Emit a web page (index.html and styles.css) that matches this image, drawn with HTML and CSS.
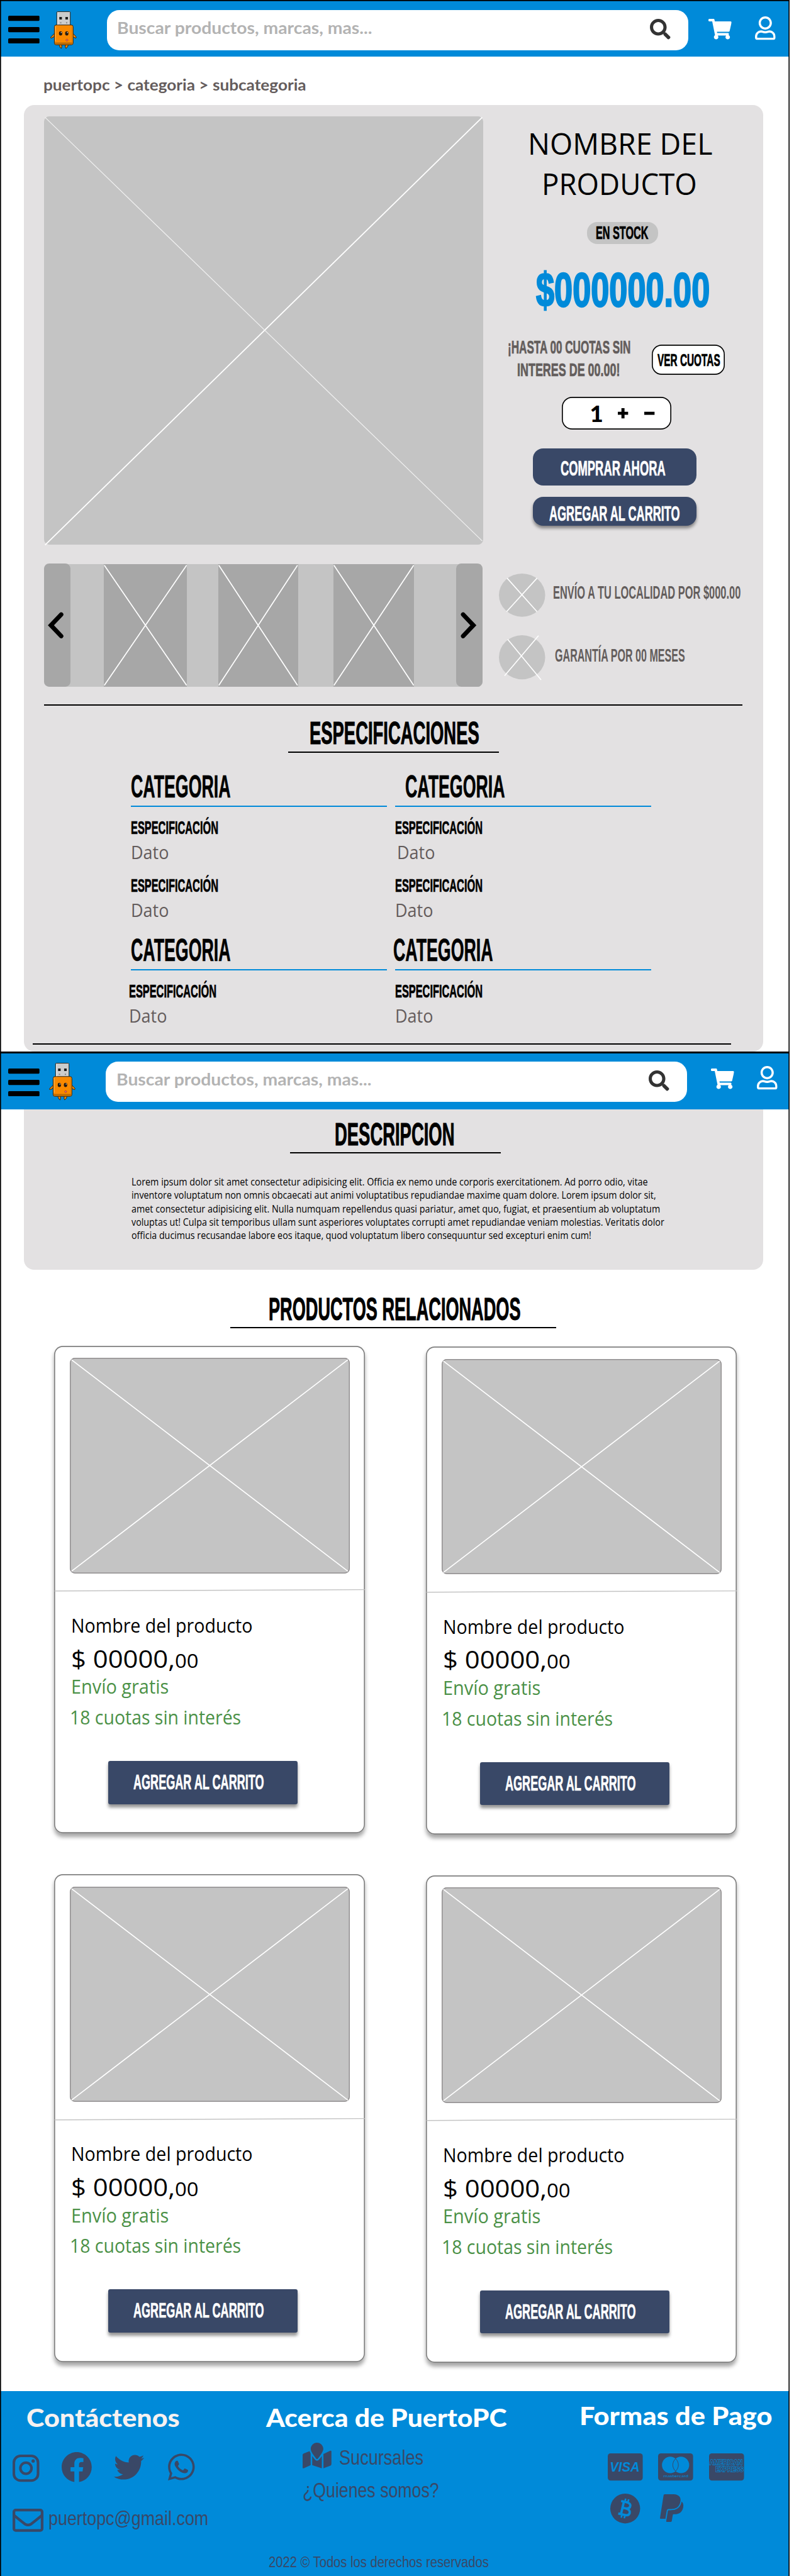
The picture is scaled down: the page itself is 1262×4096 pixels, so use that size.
FILE: index.html
```html
<!DOCTYPE html>
<html lang="es">
<head>
<meta charset="utf-8">
<title>PuertoPC - Producto</title>
<link rel="stylesheet" href="styles.css">
</head>
<body>
<svg class="sprite" aria-hidden="true">
  <symbol id="menu" viewBox="0 0 61 54"><rect width="61" height="10" rx="2"/><rect y="22" width="61" height="10" rx="2"/><rect y="44" width="61" height="10" rx="2"/></symbol>
  <symbol id="mascot" viewBox="0 0 52 73">
    <g stroke="#2b2417" stroke-width="1.2">
      <path d="M8 43L2 49Q-1 52 2 52Q7 51 8 48zM44 43L49 48Q52 52 49 52Q45 51 43 48z" fill="#f08400"/>
      <path d="M17 64Q18 71 21.500 72.300Q23 69 22 64zM29.500 64Q28 70 30.500 72.300Q35 69 35 64z" fill="#f08400"/>
      <rect x="12.600" y=".7" width="26.200" height="28" rx="1.500" fill="#ccc"/>
      <rect x="7.800" y="26.600" width="36.600" height="38.600" rx="3.500" fill="#f98900"/>
    </g>
    <path d="M8.500 60.500H44V62Q43.500 64.600 41 64.600H11Q8.500 64.500 8.500 62z" fill="#b96a06"/>
    <path d="M10 29V58" stroke="#ffb04d" stroke-width="1.500"/><path d="M42.500 29V60" stroke="#d37a0a" stroke-width="1.500"/>
    <path d="M14.500 3V26" stroke="#eee" stroke-width="1.500"/>
    <path d="M17.500 11h5v5h-5zM29.300 11h5v5h-5z" fill="#1d1d1d"/><path d="M19 21h2.500v2.500H19zM30.500 21H33v2.500h-2.500z" fill="#888"/>
    <ellipse cx="20" cy="43" rx="3.200" ry="4" fill="#241a10"/><ellipse cx="32" cy="43" rx="3.200" ry="4" fill="#241a10"/>
    <circle cx="21.200" cy="41.300" r="1" fill="#fff"/><circle cx="33.200" cy="41.300" r="1" fill="#fff"/>
    <circle cx="32.300" cy="56" r="1.900" fill="#e8607a" stroke="#8a3a1a" stroke-width=".7"/>
  </symbol>
  <symbol id="search" viewBox="0 0 512 512"><path d="M505 442.700L405.300 343c-4.500-4.500-10.600-7-17-7H372c27.600-35.300 44-79.700 44-128C416 93.100 322.900 0 208 0S0 93.100 0 208s93.100 208 208 208c48.300 0 92.700-16.400 128-44v16.300c0 6.400 2.500 12.500 7 17l99.700 99.700c9.400 9.400 24.600 9.400 33.900 0l28.300-28.300c9.400-9.400 9.400-24.600.1-34zM208 336c-70.700 0-128-57.200-128-128 0-70.700 57.200-128 128-128 70.700 0 128 57.200 128 128 0 70.700-57.200 128-128 128z"/></symbol>
  <symbol id="cart" viewBox="0 0 576 512"><path d="M528.120 301.319l47.273-208C578.806 78.301 567.391 64 551.990 64H159.208l-9.166-44.810C147.758 8.021 137.930 0 126.529 0H24C10.745 0 0 10.745 0 24v16c0 13.255 10.745 24 24 24h69.883l70.248 343.435C147.325 417.100 136 435.222 136 456c0 30.928 25.072 56 56 56s56-25.072 56-56c0-15.674-6.447-29.835-16.824-40h209.647C430.447 426.165 424 440.326 424 456c0 30.928 25.072 56 56 56s56-25.072 56-56c0-22.172-12.888-41.332-31.579-50.405l5.517-24.276c3.413-15.018-8.002-29.319-23.403-29.319H218.117l-6.545-32h293.145c11.206 0 20.920-7.754 23.403-18.681z"/></symbol>
  <symbol id="user" viewBox="0 0 448 512" preserveAspectRatio="none"><path d="M313.600 304c-28.700 0-42.500 16-89.600 16-47.100 0-60.800-16-89.600-16C60.200 304 0 364.200 0 438.400V464c0 26.500 21.500 48 48 48h352c26.500 0 48-21.500 48-48v-25.600c0-74.200-60.200-134.400-134.400-134.400zM400 464H48v-25.600c0-47.600 38.800-86.400 86.400-86.400 14.600 0 38.300 16 89.600 16 51.700 0 74.900-16 89.600-16 47.600 0 86.400 38.800 86.400 86.400V464zM224 288c79.500 0 144-64.500 144-144S303.500 0 224 0 80 64.500 80 144s64.500 144 144 144zm0-240c52.900 0 96 43.100 96 96s-43.100 96-96 96-96-43.100-96-96 43.100-96 96-96z"/></symbol>
  <symbol id="cross" viewBox="0 0 100 100" preserveAspectRatio="none"><path d="M.6.9L99.400 99.100M.6 99.100L99.400.9" fill="none" stroke="#fff" stroke-width="1.700" vector-effect="non-scaling-stroke"/></symbol>
</svg>

<div class="page">
  <header class="bar">
    <svg class="ic-menu"><use href="#menu"/></svg>
    <svg class="ic-mascot"><use href="#mascot"/></svg>
    <div class="search"><span class="fit round placeholder" style="--w:49.6rem">Buscar productos, marcas, mas...</span><svg class="ic-search"><use href="#search"/></svg></div>
    <svg class="ic-cart"><use href="#cart"/></svg>
    <svg class="ic-user"><use href="#user"/></svg>
  </header>

  <nav class="crumbs"><span class="fit round" style="--w:51.1rem">puertopc &gt; categoria &gt; subcategoria</span></nav>

  <main class="panel">
    <section class="product">
      <div class="gallery">
        <svg class="photo" viewBox="0 0 854 834"><path d="M2 834L852 2" stroke="#fff" stroke-width="2.200"/><path d="M2 2L852 826" stroke="#f2f2f2" stroke-width="1.400"/></svg>
        <div class="carousel">
          <div class="arm"><svg viewBox="0 0 31 52"><path d="M26 5L6 26L26 47" /></svg></div>
          <svg class="cell c1"><use href="#cross"/></svg>
          <svg class="cell c2"><use href="#cross"/></svg>
          <svg class="cell c3"><use href="#cross"/></svg>
          <div class="arm right"><svg viewBox="0 0 31 52"><path d="M5 5L25 26L5 47"/></svg></div>
        </div>
      </div>
      <div class="buy">
        <h1><span class="fit" style="--w:35.9rem">NOMBRE DEL</span><span class="fit l2" style="--w:30.2rem">PRODUCTO</span></h1>
        <div class="stock"><span class="fit tall" style="--w:10.2rem">EN STOCK</span></div>
        <div class="fit tall price" style="--w:33.8rem">$000000.00</div>
        <div class="quota">
          <p><span class="fit tall" style="--w:23.9rem">¡HASTA 00 CUOTAS SIN</span><span class="fit tall l2" style="--w:20rem">INTERES DE 00.00!</span></p>
          <button class="see"><span class="fit tall" style="--w:12.2rem">VER CUOTAS</span></button>
        </div>
        <div class="qty"><span>1</span><svg viewBox="0 0 20 20"><path d="M0 10H20M10 0V20"/></svg><svg viewBox="0 0 20 20"><path d="M0 10H20"/></svg></div>
        <button class="btn now"><span class="fit tall" style="--w:20.4rem">COMPRAR AHORA</span></button>
        <button class="btn add"><span class="fit tall" style="--w:25.4rem">AGREGAR AL CARRITO</span></button>
        <div class="perk p1"><svg viewBox="0 0 90 84"><ellipse cx="45" cy="42" rx="45" ry="42"/><path d="M16 9L74 74M74 9L15 74"/></svg><span class="fit tall" style="--w:36.5rem">ENVÍO A TU LOCALIDAD POR $000.00</span></div>
        <div class="perk p2"><svg viewBox="0 0 90 86"><ellipse cx="45" cy="43" rx="45" ry="43"/><path d="M17 8L82 87M77 1L11 79"/></svg><span class="fit tall" style="--w:25.3rem">GARANTÍA POR 00 MESES</span></div>
      </div>
    </section>
    <hr class="rule">
    <h2 class="fit tall t-spec" style="--w:33rem">ESPECIFICACIONES</h2>
    <hr class="under">
    <section class="specs">
      <div>
        <h3 class="fit tall" style="--w:19.4rem">CATEGORIA</h3><hr>
        <h4 class="fit tall" style="--w:17rem">ESPECIFICACIÓN</h4><p class="fit" style="--w:7.4rem">Dato</p>
        <h4 class="fit tall" style="--w:17rem">ESPECIFICACIÓN</h4><p class="fit" style="--w:7.4rem">Dato</p>
      </div>
      <div>
        <h3 class="fit tall shifted" style="--w:19.4rem">CATEGORIA</h3><hr>
        <h4 class="fit tall" style="--w:17rem">ESPECIFICACIÓN</h4><p class="fit nudge" style="--w:7.4rem">Dato</p>
        <h4 class="fit tall" style="--w:17rem">ESPECIFICACIÓN</h4><p class="fit" style="--w:7.4rem">Dato</p>
      </div>
      <div>
        <h3 class="fit tall" style="--w:19.4rem">CATEGORIA</h3><hr>
        <h4 class="fit tall back" style="--w:17rem">ESPECIFICACIÓN</h4><p class="fit back" style="--w:7.4rem">Dato</p>
      </div>
      <div>
        <h3 class="fit tall back" style="--w:19.4rem">CATEGORIA</h3><hr>
        <h4 class="fit tall" style="--w:17rem">ESPECIFICACIÓN</h4><p class="fit" style="--w:7.4rem">Dato</p>
      </div>
    </section>
    <hr class="rule end">
  </main>

  <header class="bar second">
    <svg class="ic-menu"><use href="#menu"/></svg>
    <svg class="ic-mascot"><use href="#mascot"/></svg>
    <div class="search"><span class="fit round placeholder" style="--w:49.6rem">Buscar productos, marcas, mas...</span><svg class="ic-search"><use href="#search"/></svg></div>
    <svg class="ic-cart"><use href="#cart"/></svg>
    <svg class="ic-user"><use href="#user"/></svg>
  </header>

  <section class="about">
    <h2 class="fit tall t-desc" style="--w:23.3rem">DESCRIPCION</h2>
    <hr class="under">
    <p class="lorem">
      <span class="fit" style="--w:100.4rem">Lorem ipsum dolor sit amet consectetur adipisicing elit. Officia ex nemo unde corporis exercitationem. Ad porro odio, vitae</span>
      <span class="fit" style="--w:102rem">inventore voluptatum non omnis obcaecati aut animi voluptatibus repudiandae maxime quam dolore. Lorem ipsum dolor sit,</span>
      <span class="fit" style="--w:102.8rem">amet consectetur adipisicing elit. Nulla numquam repellendus quasi pariatur, amet quo, fugiat, et praesentium ab voluptatum</span>
      <span class="fit" style="--w:103.6rem">voluptas ut! Culpa sit temporibus ullam sunt asperiores voluptates corrupti amet repudiandae veniam molestias. Veritatis dolor</span>
      <span class="fit" style="--w:89.4rem">officia ducimus recusandae labore eos itaque, quod voluptatum libero consequuntur sed excepturi enim cum!</span>
    </p>
  </section>

  <section class="related">
    <h2 class="fit tall t-rel" style="--w:49rem">PRODUCTOS RELACIONADOS</h2>
    <hr class="under wide">
    <div class="cards">
      <article class="card">
        <svg class="pic"><use href="#cross"/></svg>
        <svg class="split" viewBox="0 0 605 6"><path d="M0 4.500L605 2"/></svg>
        <p class="fit name" style="--w:35.3rem">Nombre del producto</p>
        <div class="cost"><span class="fit big" style="--w:20.2rem">$ 00000,</span><span class="fit small" style="--w:4.6rem">00</span></div>
        <p class="fit green" style="--w:19rem">Envío gratis</p>
        <p class="fit green g2" style="--w:33.300rem">18 cuotas sin interés</p>
        <button class="btn"><span class="fit tall" style="--w:25.4rem">AGREGAR AL CARRITO</span></button>
      </article>
      <article class="card">
        <svg class="pic"><use href="#cross"/></svg>
        <svg class="split" viewBox="0 0 605 6"><path d="M0 4.500L605 2"/></svg>
        <p class="fit name" style="--w:35.3rem">Nombre del producto</p>
        <div class="cost"><span class="fit big" style="--w:20.2rem">$ 00000,</span><span class="fit small" style="--w:4.6rem">00</span></div>
        <p class="fit green" style="--w:19rem">Envío gratis</p>
        <p class="fit green g2" style="--w:33.300rem">18 cuotas sin interés</p>
        <button class="btn"><span class="fit tall" style="--w:25.4rem">AGREGAR AL CARRITO</span></button>
      </article>
      <article class="card">
        <svg class="pic"><use href="#cross"/></svg>
        <svg class="split" viewBox="0 0 605 6"><path d="M0 4.500L605 2"/></svg>
        <p class="fit name" style="--w:35.3rem">Nombre del producto</p>
        <div class="cost"><span class="fit big" style="--w:20.2rem">$ 00000,</span><span class="fit small" style="--w:4.6rem">00</span></div>
        <p class="fit green" style="--w:19rem">Envío gratis</p>
        <p class="fit green g2" style="--w:33.300rem">18 cuotas sin interés</p>
        <button class="btn"><span class="fit tall" style="--w:25.4rem">AGREGAR AL CARRITO</span></button>
      </article>
      <article class="card">
        <svg class="pic"><use href="#cross"/></svg>
        <svg class="split" viewBox="0 0 605 6"><path d="M0 4.500L605 2"/></svg>
        <p class="fit name" style="--w:35.3rem">Nombre del producto</p>
        <div class="cost"><span class="fit big" style="--w:20.2rem">$ 00000,</span><span class="fit small" style="--w:4.6rem">00</span></div>
        <p class="fit green" style="--w:19rem">Envío gratis</p>
        <p class="fit green g2" style="--w:33.300rem">18 cuotas sin interés</p>
        <button class="btn"><span class="fit tall" style="--w:25.4rem">AGREGAR AL CARRITO</span></button>
      </article>
    </div>
  </section>

  <footer class="foot">
    <div class="cols">
      <section class="contact">
        <h5 class="fit round" style="--w:29.8rem">Contáctenos</h5>
        <div class="social">
          <svg class="ig" viewBox="0 0 52 53"><rect x="2.500" y="2.500" width="47" height="48" rx="13" fill="none" stroke="#394867" stroke-width="5"/><circle cx="26" cy="26.500" r="10.800" fill="none" stroke="#394867" stroke-width="5"/><circle cx="40" cy="12.500" r="3.200"/></svg>
          <svg class="fb" viewBox="8 8 496 496"><path d="M504 256C504 119 393 8 256 8S8 119 8 256c0 123.780 90.690 226.380 209.250 245V327.690h-63V256h63v-54.640c0-62.150 37-96.480 93.670-96.480 27.140 0 55.520 4.840 55.520 4.840v61h-31.280c-30.800 0-40.410 19.120-40.410 38.730V256h68.780l-11 71.690h-57.780V501C413.310 482.380 504 379.780 504 256z"/></svg>
          <svg class="tw" viewBox="0 48 512 416"><path d="M459.370 151.716c.325 4.548.325 9.097.325 13.645 0 138.720-105.583 298.558-298.558 298.558-59.452 0-114.680-17.219-161.137-47.106 8.447.974 16.568 1.299 25.340 1.299 49.055 0 94.213-16.568 130.274-44.832-46.132-.975-84.792-31.188-98.112-72.772 6.498.974 12.995 1.624 19.818 1.624 9.421 0 18.843-1.300 27.614-3.573-48.081-9.747-84.143-51.980-84.143-102.985v-1.299c13.969 7.797 30.214 12.670 47.431 13.319-28.264-18.843-46.781-51.005-46.781-87.391 0-19.492 5.197-37.360 14.294-52.954 51.655 63.675 129.300 105.258 216.365 109.807-1.624-7.797-2.599-15.918-2.599-24.040 0-57.828 46.782-104.934 104.934-104.934 30.213 0 57.502 12.670 76.670 33.137 23.715-4.548 46.456-13.320 66.599-25.340-7.798 24.366-24.366 44.833-46.132 57.827 21.117-2.273 41.584-8.122 60.426-16.243-14.292 20.791-32.161 39.308-52.628 54.253z"/></svg>
          <svg class="wa" viewBox="0 32 448 448"><path d="M380.900 97.100C339 55.100 283.200 32 223.900 32c-122.400 0-222 99.600-222 222 0 39.100 10.200 77.300 29.600 111L0 480l117.700-30.900c32.400 17.700 68.900 27 106.100 27h.1c122.300 0 224.100-99.600 224.100-222 0-59.300-25.200-115-67.100-157zm-157 341.600c-33.200 0-65.700-8.900-94-25.700l-6.700-4-69.800 18.300L72 359.200l-4.400-7c-18.500-29.400-28.200-63.300-28.200-98.200 0-101.700 82.800-184.500 184.600-184.500 49.300 0 95.600 19.200 130.400 54.100 34.800 34.900 56.200 81.200 56.100 130.500 0 101.800-84.900 184.600-186.600 184.600zm101.200-138.200c-5.500-2.800-32.800-16.200-37.900-18-5.100-1.900-8.800-2.800-12.500 2.800-3.700 5.600-14.300 18-17.600 21.800-3.200 3.700-6.500 4.200-12 1.400-32.600-16.300-54-29.100-75.500-66-5.700-9.800 5.700-9.100 16.300-30.300 1.800-3.700.9-6.900-.5-9.700-1.400-2.800-12.500-30.100-17.100-41.200-4.500-10.800-9.100-9.300-12.500-9.500-3.200-.2-6.900-.2-10.600-.2-3.700 0-9.700 1.400-14.800 6.900-5.100 5.600-19.400 19-19.400 46.300 0 27.300 19.900 53.700 22.600 57.400 2.800 3.700 39.100 59.700 94.800 83.800 35.200 15.200 49 16.500 66.600 13.900 10.700-1.600 32.800-13.400 37.400-26.400 4.600-13 4.600-24.100 3.200-26.400-1.300-2.500-5-3.900-10.500-6.600z"/></svg>
        </div>
        <div class="mail">
          <svg viewBox="0 0 60 45"><g fill="none" stroke="#394867" stroke-width="5.200"><rect x="2.600" y="2.600" width="54.800" height="39.800" rx="3.500"/><path d="M3 13Q20 27 25 30.500Q30 33 35 30.500Q40 27 57 13"/></g></svg>
          <span class="fit" style="--w:31.1rem">puertopc@gmail.com</span>
        </div>
      </section>
      <section class="company">
        <h5 class="fit round" style="--w:46.8rem">Acerca de PuertoPC</h5>
        <div class="place"><svg viewBox="0 0 576 512" preserveAspectRatio="none"><path d="M288 0c-69.590 0-126 56.410-126 126 0 56.260 82.350 158.800 113.900 196.020 6.390 7.540 17.820 7.540 24.200 0C331.650 284.800 414 182.260 414 126 414 56.410 357.590 0 288 0zM20.120 215.950A32.006 32.006 0 0 0 0 245.660v250.320c0 11.320 11.430 19.060 21.940 14.860L160 448V214.920c-8.840-15.980-16.070-31.540-21.250-46.420L20.120 215.950zM288 359.670c-14.070 0-27.380-6.180-36.510-16.960-19.660-23.200-40.570-49.620-59.490-76.720v182l192 64V266c-18.920 27.090-39.820 53.520-59.490 76.720-9.130 10.770-22.440 16.950-36.510 16.950zm266.060-198.510L416 224v288l139.880-55.950A31.996 31.996 0 0 0 576 426.340V176.020c0-11.320-11.430-19.060-21.940-14.860z"/></svg><span class="fit" style="--w:16.4rem">Sucursales</span></div>
        <p class="fit who" style="--w:26.500rem">¿Quienes somos?</p>
      </section>
      <section class="pay">
        <h5 class="fit round" style="--w:37.5rem">Formas de Pago</h5>
        <div class="brands">
          <svg viewBox="0 0 68 53"><rect width="68" height="53" rx="5.500"/><text class="visa" x="4" y="35.500" textLength="58" lengthAdjust="spacingAndGlyphs">VISA</text></svg>
          <svg viewBox="0 0 68 53"><rect width="68" height="53" rx="5.500"/><g class="cut"><circle cx="23.500" cy="22.500" r="16"/><circle cx="44.500" cy="22.500" r="16"/></g><path d="M34 10.500a16 16 0 0 1 0 24a16 16 0 0 1 0-24z" class="lens"/><text class="mc" x="10" y="46.500" textLength="49" lengthAdjust="spacingAndGlyphs">mastercard</text></svg>
          <svg viewBox="0 0 68 53"><rect width="68" height="53" rx="5.500"/><text class="amex" x="1" y="22" textLength="64" lengthAdjust="spacingAndGlyphs">AMERICAN</text><text class="amex" x="13" y="36" textLength="54" lengthAdjust="spacingAndGlyphs">EXPRESS</text></svg>
        </div>
        <div class="brands coins">
          <svg class="btc" viewBox="0 0 58 58"><circle cx="29" cy="29" r="29"/><g transform="rotate(13 29 29)" fill="none" stroke="#008ad9"><path stroke-width="4.600" d="M18 16.500H30Q37.500 17 37.500 22.500Q37.500 28 30 28.500H23.500M30 28.500Q39.500 29 39.500 35.500Q39.500 41.500 30.500 41.500H18M23.500 16.500V41.500"/><path stroke-width="3.200" d="M25.500 10V17M31.500 10V17M25.500 41V48M31.500 41V48"/></g></svg>
          <svg class="pp" viewBox="0 29 380 455" preserveAspectRatio="none"><path d="M111.400 295.900c-3.500 19.200-17.400 108.700-21.500 134-.3 1.800-1 2.500-3 2.500H12.300c-7.600 0-13.100-6.600-12.100-13.900L58.800 46.600c1.500-9.600 10.100-16.900 20-16.900 152.300 0 165.100-3.700 204 11.400 60.100 23.300 65.600 79.500 44 140.300-21.500 62.600-72.500 89.500-140.100 90.300-43.400.7-69.500-7-75.300 24.200zM357.100 152c-1.800-1.300-2.500-1.800-3 1.300-2 11.400-5.100 22.500-8.800 33.600-39.900 113.800-150.500 103.900-204.500 103.900-6.100 0-10.100 3.300-10.900 9.400-22.600 140.400-27.100 169.700-27.100 169.700-1 7.100 3.500 12.900 10.600 12.900h63.500c8.600 0 15.700-6.300 17.400-14.900.7-5.400-1.100 6.100 14.400-91.300 4.600-22 14.300-19.700 29.300-19.700 71 0 126.400-28.800 142.900-112.300 6.500-34.800 4.600-71.400-23.800-92.600z"/></svg>
        </div>
      </section>
    </div>
    <p class="fit copy" style="--w:42.8rem">2022 © Todos los derechos reservados</p>
  </footer>
</div>
<script src="fit.js"></script>
</body>
</html>
```
FILE: fit.js
```js
// Condenses or widens each .fit line so that it fills the width given in --w.
document.querySelectorAll('.fit').forEach(function (el) {
  var range = document.createRange();
  range.selectNodeContents(el);
  var natural = range.getBoundingClientRect().width;
  var wanted = el.getBoundingClientRect().width;
  if (natural > 0) el.style.transform = 'scaleX(' + (wanted / natural).toFixed(4) + ')';
});
```
FILE: styles.css
```css
/* 1rem = 10 design units */
html { font-size: 8.1735px; background: #fff; }
body { margin: 0; overflow: hidden; font-family: "Open Sans", "Noto Sans", sans-serif; font-size: 2rem; color: #000; }
* { box-sizing: border-box; }
h1, h2, h3, h4, h5, p, hr { margin: 0; font-weight: 400; }
hr { border: 0; height: 2px; margin-bottom: calc(.2rem - 2px); background: #000; }
button { display: block; border: 0; padding: 0; text-align: left; }
svg { display: block; flex: none; overflow: visible; }
.sprite { position: absolute; width: 0; height: 0; }

.page { position: relative; width: 153.6rem; height: 501.1rem; overflow: hidden; }
/* artboard frame, over the content */
.page::after { content: ""; position: absolute; inset: 0; box-shadow: inset .2rem 0 #000, inset -.2rem 0 #000, inset 0 .2rem #000; pointer-events: none; }

.fit { display: block; flex: none; width: var(--w); white-space: nowrap; transform-origin: 0 0; translate: 0 .1rem; }
.tall { font-family: "Liberation Sans", Arial, sans-serif; font-weight: 700; -webkit-text-stroke: .09rem currentColor; }
.round { font-family: Lato, sans-serif; font-weight: 700; }

/* top bar */
.bar { display: flex; align-items: flex-start; height: 11rem; padding-left: 1.6rem; background: #008ad9; }
.ic-menu { width: 6.1rem; height: 5.4rem; margin-top: 3.1rem; }
.ic-mascot { width: 5.2rem; height: 7.3rem; margin: 2.2rem 0 0 2.1rem; }
.search { display: flex; align-items: flex-start; flex: none; width: 113rem; height: 7.8rem; margin: 2rem 0 0 5.8rem; border-radius: 2.4rem; background: #fff; }
.placeholder { margin-left: 2rem; font-size: 3.15rem; line-height: 6.6rem; color: #b3b3b3; translate: 0 .2rem; }
.ic-search { width: 4rem; height: 4rem; margin: 1.7rem 3.4rem 0 auto; fill: #333; }
.ic-cart { width: 4.5rem; height: 4rem; margin: 3.7rem 0 0 4rem; fill: #fff; }
.ic-user { width: 4rem; height: 4.6rem; margin: 3.2rem 0 0 4.5rem; fill: #fff; }
.second { height: 11.2rem; border-top: .4rem solid #000; }
.second .ic-menu { margin-top: 2.9rem; }
.second .ic-mascot { margin: 1.8rem 0 0 1.9rem; }
.second .search { margin-top: 1.6rem; }
.second .ic-cart { margin: 2.85rem 0 0 4.6rem; }
.second .ic-user { margin-top: 2.4rem; }

.crumbs { height: 9.4rem; padding: 3.44rem 0 0 8.4rem; font-size: 3rem; line-height: 4rem; color: #645c5c; }

/* product panel */
.panel { width: 143.8rem; height: 184.2rem; margin-left: 4.6rem; padding: 2.2rem 0 0 4rem; border-radius: 2rem; background: #e3e1e2; }
.product { display: flex; height: 111rem; }
.gallery { width: 85.4rem; }
.photo { width: 85.4rem; height: 83.4rem; border-radius: 1rem; background: #c4c4c4; }
.carousel { display: flex; width: 85.2rem; height: 24rem; margin-top: 3.6rem; border-radius: 1rem; background: linear-gradient(#e3e1e2 .1rem, #c4c4c4 .1rem); }
.arm { width: 5.1rem; height: 24rem; padding: 9.4rem 0 0 .7rem; border-radius: 1rem; background: #a7a7a7; }
.arm svg { width: 3.1rem; height: 5.2rem; fill: none; stroke: #000; stroke-width: 8.5; stroke-linecap: round; }
.arm.right { margin-left: auto; padding-left: .9rem; }
.cell { height: 23.8rem; margin-top: .2rem; background: #a7a7a7; }
.c1 { width: 16.2rem; margin-left: 6.5rem; }
.c2 { width: 15.5rem; margin-left: 6.1rem; }
.c3 { width: 15.7rem; margin-left: 6.8rem; }

.buy { padding-left: 3rem; color: #000; }
.buy h1 { margin: 1.22rem 0 0 5.6rem; font-size: 5.88rem; line-height: 7.82rem; }
.buy h1 .l2 { margin-left: 2.8rem; }
.stock { width: 13.8rem; height: 4.3rem; margin: 3.76rem 0 0 17.2rem; padding-left: 1.7rem; border-radius: 2rem; background: #c4c4c4; font-size: 3.5rem; line-height: 4rem; }
.price { margin: 4.75rem 0 0 7.2rem; font-size: 9.2rem; line-height: 8rem; color: #008ad9; -webkit-text-stroke-width: .3rem; translate: 0 .25rem; }
.quota { display: flex; align-items: flex-start; gap: 4.2rem; margin: 5.1rem 0 0 1.7rem; }
.quota p { width: 23.9rem; font-size: 3.5rem; line-height: 4.4rem; color: #635d5c; }
.quota .l2 { margin-left: 1.9rem; }
.see { width: 14.2rem; height: 5.9rem; margin-top: 1.65rem; padding-left: 1.1rem; border-radius: 1.9rem; background: #fff; box-shadow: inset 0 0 0 .2rem #000; font-size: 3.3rem; line-height: 5.9rem; }
.qty { display: flex; align-items: center; width: 21.4rem; height: 6.4rem; margin: 3.05rem 0 0 12.2rem; padding-left: 5.5rem; border-radius: 2rem; background: #fff; box-shadow: inset 0 0 0 .2rem #000; }
.qty span { width: 2.6rem; font: 900 4.5rem/6.2rem Lato, sans-serif; text-align: center; }
.qty svg { width: 2rem; height: 2rem; margin-left: 2.9rem; fill: none; stroke: #000; stroke-width: 6; }
.qty svg + svg { margin-left: 3.1rem; }
.btn { background: #394867; color: #fff; font-size: 4rem; box-shadow: 0 .5rem .6rem rgba(0, 0, 0, .42); }
.now { width: 31.8rem; height: 7.2rem; margin: 3.6rem 0 0 6.6rem; padding-left: 5.4rem; border-radius: 2rem; line-height: 7.6rem; box-shadow: none; }
.add { width: 31.8rem; height: 5.7rem; margin: 2.2rem 0 0 6.6rem; padding-left: 3.2rem; border-radius: 2rem; line-height: 6.4rem; }
.perk { display: flex; font-size: 3.5rem; color: #635d5c; }
.perk .tall { -webkit-text-stroke-width: 0; }
.perk svg { width: 9rem; fill: #c4c4c4; stroke-width: 2; }
.perk path { stroke: #fff; }
.p1 { height: 8.4rem; margin-top: 9.3rem; gap: 1.6rem; line-height: 7.2rem; }
.p2 { height: 8.6rem; margin-top: 3.6rem; gap: 1.9rem; line-height: 7.6rem; }

.rule { width: 135.8rem; margin-top: 3.4rem; }
.rule.end { margin: 3.8rem 0 0 -2.2rem; }
h2.fit { font-size: 6.1rem; line-height: 7rem; -webkit-text-stroke-width: .13rem; translate: 0 .25rem; }
.t-spec { margin: 1.8rem 0 0 51.6rem; }
.under { width: 41rem; margin-top: .2rem; margin-left: 47.4rem; }
.specs { display: grid; grid-template-columns: 49.8rem 49.8rem; column-gap: 1.6rem; row-gap: 3.56rem; margin: 4rem 0 0 16.8rem; }
.specs h3 { font-size: 6.1rem; line-height: 5rem; translate: 0 .25rem; }
.specs hr { margin-top: 1.3rem; background: #008ad9; }
.specs h4 { margin-top: 3.21rem; font-size: 3.65rem; line-height: 3rem; }
.specs hr + h4 { margin-top: 2.55rem; }
.specs p { margin-top: 1.39rem; font-size: 3.5rem; line-height: 3.6rem; color: #645c5c; }
.specs .shifted { margin-left: 2rem; }
.specs .nudge { margin-left: .4rem; }
.specs .back { margin-left: -.3rem; }

/* description */
.about { width: 143.8rem; height: 31.2rem; margin-left: 4.6rem; padding: 1.2rem 0 0 4rem; border-radius: 0 0 2rem 2rem; background: #e3e1e2; }
.t-desc { margin-left: 56.5rem; }
.about .under { margin-left: 47.8rem; }
.lorem { margin: 4.16rem 0 0 17rem; font-size: 1.9rem; line-height: 2.6rem; }

/* related products */
.t-rel { margin: 4rem 0 0 52.2rem; }
.under.wide { width: 63.4rem; margin-left: 44.8rem; }
.cards { display: grid; grid-template-columns: 60.5rem 60.5rem; grid-auto-rows: 94.9rem; gap: 7.9rem 11.8rem; margin: 3.4rem 0 0 10.5rem; }
.card { padding-top: 2.4rem; border-radius: 1.7rem; box-shadow: inset 0 0 0 .2rem #7f7f7f, 0 .7rem .8rem rgba(0, 0, 0, .35); }
.card:nth-child(even) { margin: .2rem 0 -.2rem; }
.pic { width: 54.4rem; height: 41.9rem; margin-left: 3.1rem; border-radius: 1rem; background: #c4c4c4; box-shadow: inset 0 0 0 .18rem #918e8f; }
.split { width: 60.5rem; height: .6rem; margin-top: 3rem; stroke: #c4c4c4; stroke-width: 1.8; }
.card p { margin-left: 3.3rem; font-size: 3.8rem; line-height: 5rem; }
.card .name { margin-top: 3.9rem; }
.cost { display: flex; align-items: baseline; height: 5rem; margin: 1.45rem 0 0 3.3rem; line-height: 5rem; }
.big { font-size: 4.76rem; }
.small { font-size: 3.9rem; }
.card .green { margin-top: .33rem; color: #4b9147; translate: 0 .2rem; }
.card .g2 { margin-top: 1.1rem; margin-left: 3.1rem; translate: 0 .1rem; }
.card .btn { width: 36.9rem; height: 8.4rem; margin: 6.1rem 0 0 10.5rem; padding-left: 4.9rem; border-radius: .4rem; line-height: 8.1rem; }
.card .btn .fit { translate: none; }

/* footer */
.foot { height: 36rem; margin-top: 5.7rem; background: #008ad9; color: #394867; fill: #394867; font-family: "Liberation Sans", Arial, sans-serif; }
.cols { display: flex; height: 31.16rem; }
.foot h5 { margin-top: 1.92rem; font-size: 4.86rem; line-height: 6rem; font-weight: 900; color: #fff; }
.contact { width: 51.7rem; }
.contact h5 { margin-left: 5.1rem; color: #f6f1f1; }
.social { display: flex; height: 5.9rem; margin: 3.88rem 0 0 2.4rem; }
.ig { width: 5.2rem; height: 5.3rem; margin-top: .5rem; }
.fb { width: 5.85rem; height: 5.85rem; margin-left: 4.45rem; }
.tw { width: 5.9rem; height: 4.9rem; margin: .5rem 0 0 4.2rem; }
.wa { width: 5.2rem; height: 5.3rem; margin: .3rem 0 0 4.7rem; }
.mail { display: flex; gap: 1rem; margin: 5.2rem 0 0 2.4rem; font-size: 3.9rem; line-height: 4rem; }
.mail svg { width: 6rem; height: 4.5rem; }
.mail span { margin-top: -.25rem; }
.company { width: 61rem; }
.place { display: flex; gap: 1.6rem; height: 5.6rem; margin: 2.08rem 0 0 7.1rem; font-size: 4rem; line-height: 5.6rem; }
.place svg { width: 5.6rem; height: 5rem; }
.who { margin: 1.1rem 0 0 7.2rem; font-size: 4rem; line-height: 5rem; }
.pay h5 { margin-top: 1.52rem; }
.brands { display: flex; gap: 3.03rem; height: 5.3rem; margin: 4.58rem 0 0 5.5rem; }
.brands svg { width: 6.8rem; height: 5.3rem; }
.cut { fill: #008ad9; }
.lens { fill: #008ad9; stroke: #394867; stroke-width: 1.2; }
.brands text { fill: #008ad9; font-weight: 700; }
.visa { font-size: 27px; font-style: italic; font-weight: 900; }
.brands .mc { font: 400 8px Lato, sans-serif; }
.brands .amex { font-size: 12.5px; fill: #394867; stroke: #008ad9; stroke-width: 1.6px; paint-order: stroke; }
.brands.coins { gap: 0; margin: 2.5rem 0 0 6rem; }
.brands .btc { width: 5.8rem; height: 5.8rem; }
.brands .pp { width: 4.5rem; height: 5.4rem; margin: .2rem 0 0 3.9rem; }
.copy { margin-left: 52.3rem; font-size: 3rem; line-height: 4rem; }
```
